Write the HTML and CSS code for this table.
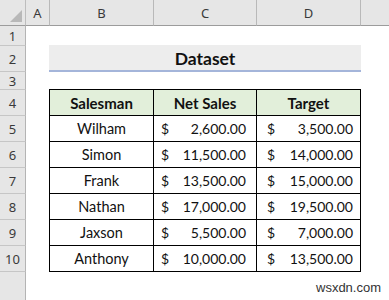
FILE: index.html
```html
<!DOCTYPE html>
<html>
<head>
<meta charset="utf-8">
<link rel="stylesheet" href="styles.css">
</head>
<body>
<div class="sheet">
  <div class="corner"><svg width="26" height="26" viewBox="0 0 26 26"><polygon points="22,10 22,22 10,22" fill="#b8b8b8"/></svg></div>
  <div class="colhdr">A</div>
  <div class="colhdr">B</div>
  <div class="colhdr">C</div>
  <div class="colhdr">D</div>
  <div class="colhdr last"></div>

  <div class="rowhdr r1">1</div>
  <div class="rowhdr r2">2</div>
  <div class="rowhdr r3">3</div>
  <div class="rowhdr r4">4</div>
  <div class="rowhdr r5">5</div>
  <div class="rowhdr r6">6</div>
  <div class="rowhdr r7">7</div>
  <div class="rowhdr r8">8</div>
  <div class="rowhdr r9">9</div>
  <div class="rowhdr r10">10</div>
  <div class="rowhdr r11"></div>

  <div class="title">Dataset</div>

  <div class="data">
    <div class="cell head">Salesman</div>
    <div class="cell head">Net Sales</div>
    <div class="cell head">Target</div>

    <div class="cell name">Wilham</div>
    <div class="cell money"><span>$</span><span>2,600.00</span></div>
    <div class="cell money d"><span>$</span><span>3,500.00</span></div>

    <div class="cell name">Simon</div>
    <div class="cell money"><span>$</span><span>11,500.00</span></div>
    <div class="cell money d"><span>$</span><span>14,000.00</span></div>

    <div class="cell name">Frank</div>
    <div class="cell money"><span>$</span><span>13,500.00</span></div>
    <div class="cell money d"><span>$</span><span>15,000.00</span></div>

    <div class="cell name">Nathan</div>
    <div class="cell money"><span>$</span><span>17,000.00</span></div>
    <div class="cell money d"><span>$</span><span>19,500.00</span></div>

    <div class="cell name">Jaxson</div>
    <div class="cell money"><span>$</span><span>5,500.00</span></div>
    <div class="cell money d"><span>$</span><span>7,000.00</span></div>

    <div class="cell name">Anthony</div>
    <div class="cell money"><span>$</span><span>10,000.00</span></div>
    <div class="cell money d"><span>$</span><span>13,500.00</span></div>
  </div>

  <div class="watermark">wsxdn.com</div>
</div>
</body>
</html>
```

FILE: styles.css
```css
* { box-sizing: border-box; }
html, body { margin: 0; padding: 0; background: #ffffff; }
.sheet {
  position: relative;
  width: 389px;
  height: 300px;
  overflow: hidden;
  display: grid;
  grid-template-columns: 26px 24px 104px 103px 104px 1fr;
  grid-template-rows: 26px 20px 26px 18px repeat(7, 26px) 1fr;
  background: #ffffff;
  font-family: Lato, "Liberation Sans", sans-serif;
}
.corner {
  grid-column: 1; grid-row: 1;
  background: #e6e6e6;
  border-right: 1px solid #bdbdbd;
  border-bottom: 1px solid #9c9c9c;
}
.corner svg { display: block; }
.colhdr {
  grid-row: 1;
  background: #e6e6e6;
  border-right: 1px solid #b9b9b9;
  border-bottom: 1px solid #9c9c9c;
  display: flex;
  align-items: center;
  justify-content: center;
  font-family: "Noto Sans", "Open Sans", sans-serif;
  font-size: 13px;
  color: #3a3a3a;
  padding-top: 1px;
}
.colhdr.last { border-right: none; }
.rowhdr {
  grid-column: 1;
  background: #e6e6e6;
  border-right: 1px solid #b4b4b4;
  border-bottom: 1px solid #c6c6c6;
  display: flex;
  align-items: center;
  justify-content: center;
  font-family: "Noto Sans", "Open Sans", sans-serif;
  font-size: 13px;
  color: #3a3a3a;
}
.rowhdr.r11 { border-bottom: none; }
.title {
  grid-column: 3 / 6;
  grid-row: 3;
  margin-left: -1px;
  margin-top: -1px;
  background: #ededed;
  border-bottom: 2px solid #a4b5da;
  display: flex;
  align-items: center;
  justify-content: center;
  font-weight: 700;
  font-size: 17.5px;
  color: #111;
  padding-top: 1px;
}
.data {
  grid-column: 3 / 6;
  grid-row: 5 / 12;
  margin-left: -1px;
  margin-top: -1px;
  display: grid;
  grid-template-columns: 104px 103px 104px;
  grid-auto-rows: 26px;
  border-left: 1px solid #000;
  border-top: 1px solid #000;
}
.cell {
  border-right: 1px solid #000;
  border-bottom: 1px solid #000;
  display: flex;
  align-items: center;
  font-size: 14px;
  color: #111;
}
.head {
  background: #e2efda;
  font-weight: 700;
  font-size: 15px;
  justify-content: center;
}
.name { justify-content: center; font-size: 14.5px; }
.money {
  justify-content: space-between;
  padding: 0 10px 0 7px;
}
.money.d { padding: 0 7px 0 10px; }
.watermark {
  position: absolute;
  left: 316px;
  top: 280px;
  font-family: "Liberation Sans", Arial, sans-serif;
  font-size: 13px;
  color: #333;
}
```
